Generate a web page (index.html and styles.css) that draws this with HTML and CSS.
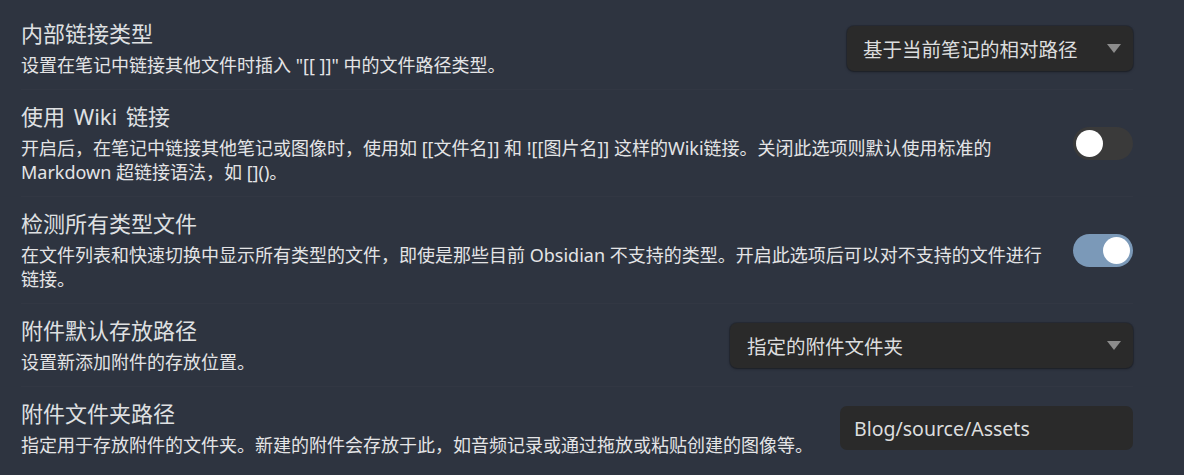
FILE: index.html
```html
<!DOCTYPE html>
<html lang="zh-CN">
<head>
<meta charset="utf-8">
<link rel="stylesheet" href="styles.css">
</head>
<body>
<div class="settings">
  <div class="item">
    <div class="info">
      <div class="name">内部链接类型</div>
      <div class="desc">设置在笔记中链接其他文件时插入 "[[ ]]" 中的文件路径类型。</div>
    </div>
    <div class="control">
      <div class="select select-short"><span>基于当前笔记的相对路径</span><span class="arrow"></span></div>
    </div>
  </div>
  <div class="item">
    <div class="info">
      <div class="name">使用 Wiki 链接</div>
      <div class="desc">开启后，在笔记中链接其他笔记或图像时，使用如 [[文件名]] 和 ![[图片名]] 这样的Wiki链接。关闭此选项则默认使用标准的 Markdown 超链接语法，如 []()。</div>
    </div>
    <div class="control">
      <div class="toggle"><span class="knob"></span></div>
    </div>
  </div>
  <div class="item">
    <div class="info">
      <div class="name">检测所有类型文件</div>
      <div class="desc">在文件列表和快速切换中显示所有类型的文件，即使是那些目前 Obsidian 不支持的类型。开启此选项后可以对不支持的文件进行链接。</div>
    </div>
    <div class="control">
      <div class="toggle on"><span class="knob"></span></div>
    </div>
  </div>
  <div class="item">
    <div class="info">
      <div class="name">附件默认存放路径</div>
      <div class="desc">设置新添加附件的存放位置。</div>
    </div>
    <div class="control">
      <div class="select select-wide"><span>指定的附件文件夹</span><span class="arrow"></span></div>
    </div>
  </div>
  <div class="item">
    <div class="info">
      <div class="name">附件文件夹路径</div>
      <div class="desc">指定用于存放附件的文件夹。新建的附件会存放于此，如音频记录或通过拖放或粘贴创建的图像等。</div>
    </div>
    <div class="control">
      <div class="textinput">Blog/source/Assets</div>
    </div>
  </div>
</div>
</body>
</html>
```
FILE: styles.css
```css
html, body {
  margin: 0;
  padding: 0;
  background: #2e3440;
  width: 1184px;
  height: 475px;
  overflow: hidden;
}
body {
  font-family: "Noto Sans", "Noto Sans CJK SC", sans-serif;
  color: #dcddde;
}
.settings {
  padding: 7px 51px 0 21px;
}
.item {
  display: flex;
  align-items: center;
  padding: 12.5px 0;
  border-top: 1px solid #323743;
}
.item:first-child {
  border-top: none;
}
.info {
  flex: 1;
  min-width: 0;
  margin-right: 22px;
}
.name {
  font-size: 22px;
  line-height: 26px;
  color: #dfe0e2;
  word-spacing: 3px;
}
.desc {
  margin-top: 7px;
  font-size: 18px;
  line-height: 24px;
  color: #e4e4e6;
}
.control {
  flex: none;
  display: flex;
  justify-content: flex-end;
}
.select {
  box-sizing: border-box;
  height: 45px;
  background: #2a2a2a;
  border-radius: 7px;
  box-shadow: 0 1px 3px rgba(0,0,0,0.35), 0 0 0 1px rgba(0,0,0,0.15);
  display: flex;
  align-items: center;
  justify-content: space-between;
  padding: 0 12px 0 16px;
  font-size: 19.5px;
  color: #dcddde;
}
.select-short { width: 286px; }
.select-wide { width: 403px; padding-left: 17px; }
.arrow {
  width: 0;
  height: 0;
  border-left: 7px solid transparent;
  border-right: 7px solid transparent;
  border-top: 9px solid #8c8c8c;
}
.toggle {
  width: 60px;
  height: 33px;
  border-radius: 17px;
  background: #3a3a3a;
  position: relative;
}
.toggle .knob {
  position: absolute;
  top: 3px;
  left: 3px;
  width: 27px;
  height: 27px;
  border-radius: 50%;
  background: #ffffff;
}
.toggle.on {
  background: #7b99b8;
}
.toggle.on .knob {
  left: auto;
  right: 3px;
}
.textinput {
  box-sizing: border-box;
  width: 293px;
  height: 44px;
  background: #2a2a2a;
  border-radius: 7px;
  display: flex;
  align-items: center;
  padding: 0 14px;
  font-size: 19.5px;
  color: #dcddde;
}
```
